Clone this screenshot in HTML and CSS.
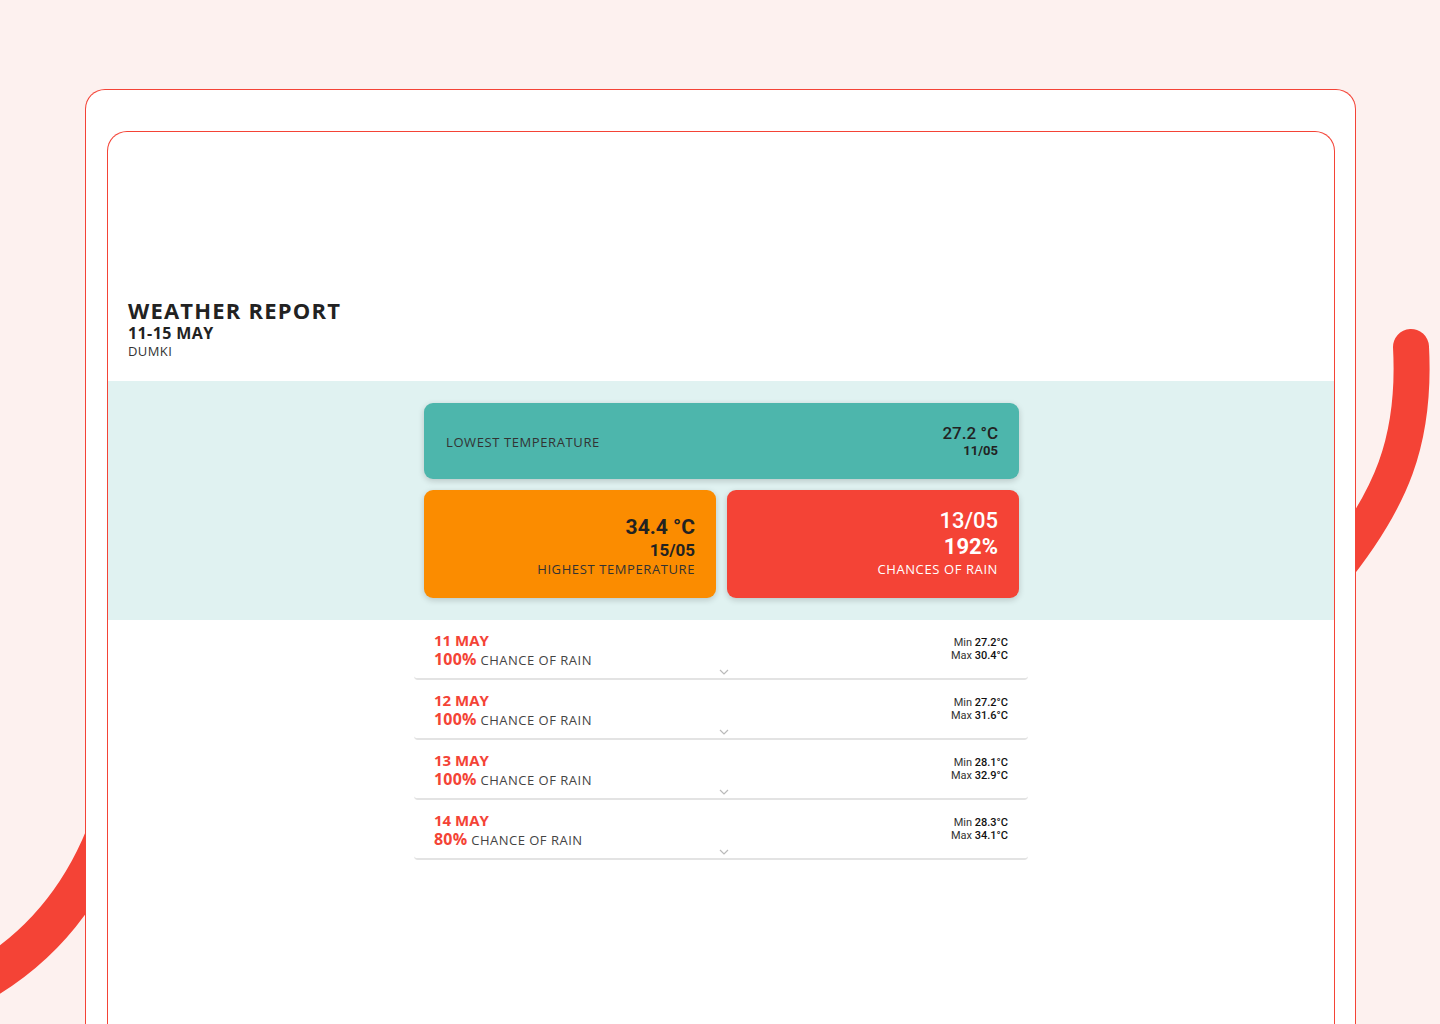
FILE: index.html
```html
<!DOCTYPE html>
<html>
<head>
<meta charset="utf-8">
<link rel="stylesheet" href="styles.css">
</head>
<body>
<svg class="deco" width="1440" height="1024" viewBox="0 0 1440 1024">
  <path d="M1411 347 C 1416 440, 1392 500, 1330 576" fill="none" stroke="#f44336" stroke-width="36" stroke-linecap="round"/>
  <path d="M118 800 Q 80 930 -30 988" fill="none" stroke="#f44336" stroke-width="40"/>
</svg>
<div class="outer">
  <div class="inner">
    <header class="head">
      <h1 class="title">WEATHER REPORT</h1>
      <div class="range">11-15 MAY</div>
      <div class="place">DUMKI</div>
    </header>
    <section class="band">
      <div class="cards">
        <div class="card low">
          <div class="label">LOWEST TEMPERATURE</div>
          <div class="vals">
            <div class="big">27.2 °C</div>
            <div class="small">11/05</div>
          </div>
        </div>
        <div class="pair">
          <div class="card high">
            <div class="big2">34.4 °C</div>
            <div class="mid">15/05</div>
            <div class="label">HIGHEST TEMPERATURE</div>
          </div>
          <div class="card rain">
            <div class="big2 light">13/05</div>
            <div class="big2 bold">192%</div>
            <div class="label">CHANCES OF RAIN</div>
          </div>
        </div>
      </div>
    </section>
    <section class="list">
      <div class="row">
        <div class="left">
          <div class="day">11 MAY</div>
          <div class="chance"><span class="pct">100%</span> CHANCE OF RAIN</div>
        </div>
        <div class="right">
          <div>Min <b>27.2°C</b></div>
          <div>Max <b>30.4°C</b></div>
        </div>
        <svg class="chev" width="10" height="6" viewBox="0 0 10 6"><path d="M1 1 L5 5 L9 1" fill="none" stroke="#bbb" stroke-width="1.2"/></svg>
      </div>
      <div class="row">
        <div class="left">
          <div class="day">12 MAY</div>
          <div class="chance"><span class="pct">100%</span> CHANCE OF RAIN</div>
        </div>
        <div class="right">
          <div>Min <b>27.2°C</b></div>
          <div>Max <b>31.6°C</b></div>
        </div>
        <svg class="chev" width="10" height="6" viewBox="0 0 10 6"><path d="M1 1 L5 5 L9 1" fill="none" stroke="#bbb" stroke-width="1.2"/></svg>
      </div>
      <div class="row">
        <div class="left">
          <div class="day">13 MAY</div>
          <div class="chance"><span class="pct">100%</span> CHANCE OF RAIN</div>
        </div>
        <div class="right">
          <div>Min <b>28.1°C</b></div>
          <div>Max <b>32.9°C</b></div>
        </div>
        <svg class="chev" width="10" height="6" viewBox="0 0 10 6"><path d="M1 1 L5 5 L9 1" fill="none" stroke="#bbb" stroke-width="1.2"/></svg>
      </div>
      <div class="row">
        <div class="left">
          <div class="day">14 MAY</div>
          <div class="chance"><span class="pct">80%</span> CHANCE OF RAIN</div>
        </div>
        <div class="right">
          <div>Min <b>28.3°C</b></div>
          <div>Max <b>34.1°C</b></div>
        </div>
        <svg class="chev" width="10" height="6" viewBox="0 0 10 6"><path d="M1 1 L5 5 L9 1" fill="none" stroke="#bbb" stroke-width="1.2"/></svg>
      </div>
    </section>
  </div>
</div>
</body>
</html>
```
FILE: styles.css
```css
html, body {
  margin: 0;
  padding: 0;
}
body {
  background: #fdf1ef;
  width: 1440px;
  height: 1024px;
  overflow: hidden;
  position: relative;
  font-family: "Open Sans", "DejaVu Sans", sans-serif;
  color: #222;
}
.deco {
  position: absolute;
  left: 0;
  top: 0;
  z-index: 0;
}
.outer {
  position: relative;
  z-index: 1;
  margin: 89px 0 0 85px;
  width: 1271px;
  height: 935px;
  background: #fff;
  border: 1px solid #f44336;
  border-bottom: none;
  border-radius: 20px 20px 0 0;
  padding: 41px 20px 0 21px;
  box-sizing: border-box;
  overflow: hidden;
}
.inner {
  height: 900px;
  border: 1px solid #f44336;
  border-bottom: none;
  border-radius: 20px 20px 0 0;
  box-sizing: border-box;
  padding-top: 166px;
}
.head {
  padding: 0 0 21px 20px;
}
.title {
  margin: 0;
  font-size: 22px;
  font-weight: 700;
  line-height: 25px;
  letter-spacing: 1.2px;
  color: #222;
}
.range {
  font-size: 16px;
  font-weight: 700;
  line-height: 20px;
  letter-spacing: 0.4px;
  color: #222;
}
.place {
  font-size: 13px;
  line-height: 17px;
  color: #333;
  letter-spacing: 0.4px;
}
.band {
  background: #e0f2f1;
  padding: 22px 0 22px;
  display: flex;
  justify-content: center;
}
.cards {
  width: 595px;
  margin-left: 1px;
  display: flex;
  flex-direction: column;
  gap: 11px;
}
.card {
  border-radius: 9px;
  box-shadow: 0 2px 6px rgba(0,0,0,0.18);
  box-sizing: border-box;
}
.low {
  background: #4db6ac;
  height: 76px;
  display: flex;
  align-items: center;
  justify-content: space-between;
  padding: 0 21px 0 22px;
}
.label {
  font-size: 13px;
  letter-spacing: 0.6px;
  color: #333;
}
.low .label {
  margin-top: 2px;
}
.vals {
  text-align: right;
  font-family: Roboto, sans-serif;
  color: #222;
}
.big {
  font-size: 17px;
  font-weight: 500;
  line-height: 20px;
}
.small {
  font-size: 13px;
  font-weight: 700;
  line-height: 16px;
}
.pair {
  display: flex;
  gap: 11px;
}
.pair .card {
  flex: 1;
  height: 108px;
  display: flex;
  flex-direction: column;
  align-items: flex-end;
  justify-content: flex-end;
  padding: 0 21px 20px;
}
.high {
  background: #fb8c00;
}
.rain {
  background: #f44336;
  color: #fff;
}
.rain .label {
  color: #fff;
}
.big2 {
  font-family: Roboto, sans-serif;
  font-size: 22px;
  font-weight: 500;
  line-height: 26px;
}
.high .big2 {
  font-size: 21px;
  font-weight: 700;
  color: #222;
}
.bold {
  font-weight: 700;
}
.mid {
  font-family: Roboto, sans-serif;
  font-size: 17px;
  font-weight: 700;
  line-height: 20px;
  color: #222;
}
.list {
  width: 614px;
  margin: 0 0 0 306px;
}
.row {
  position: relative;
  height: 60px;
  box-sizing: border-box;
  border-bottom: 2px solid #e3e3e3;
  border-radius: 0 0 4px 4px;
  display: flex;
  justify-content: space-between;
  padding: 11px 20px 0;
}
.day {
  font-size: 15px;
  font-weight: 700;
  color: #f44336;
  line-height: 18px;
}
.chance {
  font-size: 13px;
  color: #444;
  line-height: 20px;
  letter-spacing: 0.5px;
}
.pct {
  font-size: 16px;
  font-weight: 700;
  letter-spacing: 0.2px;
  color: #f44336;
}
.right {
  font-family: Roboto, sans-serif;
  font-size: 11px;
  line-height: 13px;
  text-align: right;
  color: #333;
  padding-top: 5px;
}
.right b {
  font-weight: 500;
  color: #111;
}
.chev {
  position: absolute;
  left: 305px;
  bottom: 3px;
}
```
